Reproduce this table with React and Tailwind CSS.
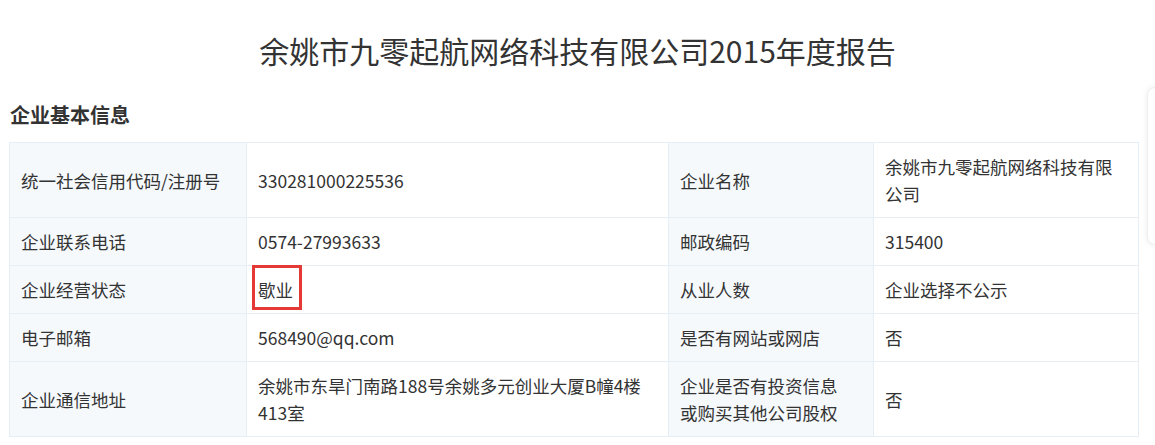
import React from "react";

const rows = [
  ["统一社会信用代码/注册号", "330281000225536", "企业名称", "余姚市九零起航网络科技有限公司"],
  ["企业联系电话", "0574-27993633", "邮政编码", "315400"],
  ["企业经营状态", "歇业", "从业人数", "企业选择不公示"],
  ["电子邮箱", "568490@qq.com", "是否有网站或网店", "否"],
  [
    "企业通信地址",
    "余姚市东旱门南路188号余姚多元创业大厦B幢4楼413室",
    <>
      企业是否有投资信息
      <br />
      或购买其他公司股权
    </>,
    "否",
  ],
];

const labelCls =
  "border border-[#e6eff5] bg-[#f5f9fc] px-[11px] py-[10px] align-middle leading-[27px]";
const valueCls =
  "border border-[#e6eff5] bg-white px-[11px] py-[10px] align-middle leading-[27px]";

export default function App() {
  return (
    <div
      className="relative h-[445px] w-[1155px] overflow-hidden bg-white text-[#333]"
      style={{ fontFamily: '"Noto Sans CJK SC", "Noto Sans", sans-serif' }}
    >
      <h1 className="pt-[28px] text-center text-[30px] leading-[45px] text-[#333]">
        余姚市九零起航网络科技有限公司2015年度报告
      </h1>

      <h2 className="mt-[27px] pl-[10px] text-[20px] font-bold leading-[30px] text-[#333]">
        企业基本信息
      </h2>

      <div className="mt-[12px] pl-[9px]">
        <table className="w-[1129px] table-fixed border-collapse text-[17.5px]">
          <colgroup>
            <col className="w-[237px]" />
            <col className="w-[422px]" />
            <col className="w-[205px]" />
            <col className="w-[265px]" />
          </colgroup>
          <tbody>
            {rows.map((r, i) => (
              <tr key={i}>
                <td className={labelCls}>{r[0]}</td>
                <td className={valueCls}>
                  {r[1] === "歇业" ? (
                    <span className="relative inline-block">
                      {r[1]}
                      <span className="absolute -top-[11px] -bottom-[7px] -left-[6px] -right-[9px] border-[3px] border-[#e53935]" />
                    </span>
                  ) : (
                    r[1]
                  )}
                </td>
                <td className={labelCls}>{r[2]}</td>
                <td className={valueCls}>{r[3]}</td>
              </tr>
            ))}
          </tbody>
        </table>
      </div>

      {/* side floating panel */}
      <div className="absolute left-[1147px] top-[87px] h-[158px] w-[24px] rounded-l-lg border border-[#eceff2] bg-white shadow-[0_0_6px_rgba(0,0,0,0.08)]" />
    </div>
  );
}
